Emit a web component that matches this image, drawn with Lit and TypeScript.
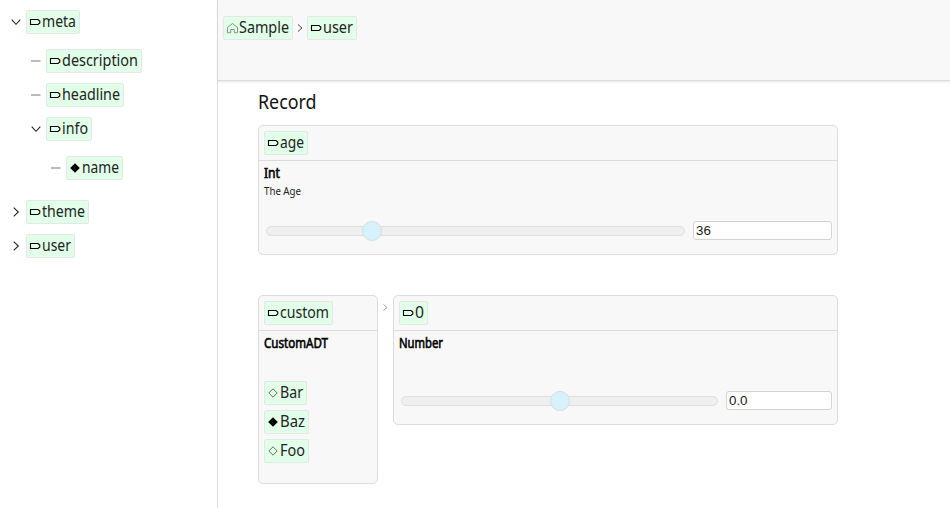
import { LitElement, html, svg, css } from "lit";
import { customElement, property } from "lit/decorators.js";

type IconName = "tag" | "home" | "full" | "empty";

const icons = {
  tag: svg`<path d="M0.5 2.5H8L9.8 4.1V5.9L8 7.5H0.5Z" fill="none" stroke="#000" stroke-width="1.1"/>`,
  home: svg`<path d="M.5 9.7V4.5L5.5 .5L10.5 4.5V9.7H7.3V6.5H3.7V9.7Z" fill="none" stroke="#7f9983" stroke-width="1"/>`,
  full: svg`<path d="M5 .2L9.8 5L5 9.8L.2 5Z" fill="#000"/>`,
  empty: svg`<path d="M5 .8L9.2 5L5 9.2L.8 5Z" fill="none" stroke="#617565" stroke-width="1"/>`,
};

/* A line of text set to a known advance width. */
@customElement("fit-text")
class FitText extends LitElement {
  static styles = css`
    :host { display: block; flex: none; }
    svg { display: block; overflow: visible; }
  `;
  @property() text = "";
  @property({ type: Number }) w = 40;
  @property({ type: Number }) size = 16.2;
  @property({ type: Number }) base = 16;
  @property({ type: Number }) heavy = 0;
  @property() color = "#1c241e";
  render() {
    return html`<svg width=${this.w} height="22">
      <text x="0" y=${this.base} font-family="Noto Sans, sans-serif" font-size=${this.size}
        fill=${this.color} stroke=${this.color} stroke-width=${this.heavy}
        textLength=${this.w} lengthAdjust="spacingAndGlyphs">${this.text}</text>
    </svg>`;
  }
}

@customElement("key-chip")
class KeyChip extends LitElement {
  static styles = css`
    :host { display: block; flex: none; }
    .chip {
      box-sizing: border-box; height: 24px; display: flex; align-items: center;
      padding: 0 3px; border: 1px solid #e2e8e3; border-radius: 2px;
      background: #e2ffe9; gap: 2px;
    }
    .icon { width: 10px; height: 10px; flex: none; overflow: visible; }
  `;
  @property() label = "";
  @property() icon: IconName = "tag";
  @property({ type: Number }) w = 54;
  render() {
    return html`<div class="chip" style="width:${this.w}px">
      <svg class="icon" viewBox="0 0 10 10">${icons[this.icon]}</svg>
      <fit-text .text=${this.label} .w=${this.w - 20}></fit-text>
    </div>`;
  }
}

@customElement("range-field")
class RangeField extends LitElement {
  static styles = css`
    :host { display: flex; align-items: center; height: 20px; gap: 8px; }
    .track {
      box-sizing: border-box; position: relative; flex: 1; height: 10px;
      border: 1px solid #dfdfdf; border-radius: 5px; background: #efefef;
    }
    .thumb {
      box-sizing: border-box; position: absolute; top: -6px; width: 20px; height: 20px;
      border: 1px solid #d5dde0; border-radius: 50%; background: #d7f2fb;
    }
    .box {
      box-sizing: border-box; height: 19px; border: 1px solid #d3d3d3; border-radius: 3px;
      margin-bottom: 1px; padding: 0 2px; background: #fff; color: #1a1a1a;
      font: 13.333px/17px "Liberation Sans", Arial, sans-serif;
    }
  `;
  @property() value = "";
  @property({ type: Number }) at = 0;
  @property({ type: Number }) boxWidth = 139;
  render() {
    return html`<div class="track"><div class="thumb" style="left:${this.at}px"></div></div>
      <div class="box" style="width:${this.boxWidth}px">${this.value}</div>`;
  }
}

interface TreeNode {
  label: string;
  w: number;
  icon?: IconName;
  state: "open" | "closed" | "leaf";
  children?: TreeNode[];
}

const tree: TreeNode[] = [
  { label: "meta", w: 54, state: "open", children: [
    { label: "description", w: 96, state: "leaf" },
    { label: "headline", w: 78, state: "leaf" },
    { label: "info", w: 46, state: "open", children: [
      { label: "name", w: 57, icon: "full", state: "leaf" },
    ] },
  ] },
  { label: "theme", w: 63, state: "closed" },
  { label: "user", w: 49, state: "closed" },
];

const markers = {
  open: svg`<path d="M.7 2.7L5 7.3L9.3 2.7" fill="none" stroke="#222" stroke-width="1.1"/>`,
  closed: svg`<path d="M2.7 .7L7.3 5L2.7 9.3" fill="none" stroke="#222" stroke-width="1.1"/>`,
  leaf: svg`<path d="M0 5H9.5" fill="none" stroke="#bbb" stroke-width="2"/>`,
};

@customElement("app-root")
class AppRoot extends LitElement {
  static styles = css`
    :host { display: flex; width: 950px; height: 508px; overflow: hidden; background: #fff; }
    .side {
      box-sizing: border-box; width: 218px; flex: none; padding: 10px 0 0 11px;
      border-right: 1px solid #dcdcdc;
    }
    .nodes { display: flex; flex-direction: column; gap: 10px; }
    .nodes .nodes { padding: 15px 0 5px 20px; }
    .line { display: flex; align-items: center; gap: 5px; }
    .marker { width: 10px; height: 10px; flex: none; overflow: visible; }
    .main { flex: 1; min-width: 0; display: flex; flex-direction: column; }
    .bar {
      box-sizing: border-box; height: 81px; flex: none; display: flex; align-items: flex-start;
      padding: 16px 5px 0; background: #f8f8f8; border-bottom: 1px solid #dcdcdc;
      box-shadow: 0 1px 2px #0000001a;
    }
    .sep { width: 14px; height: 24px; flex: none; }
    .content { width: 580px; padding: 11px 0 0 40px; }
    .title { height: 22px; margin-bottom: 11px; }
    .card {
      box-sizing: border-box; border: 1px solid #dcdcdc; border-radius: 5px;
      background: #f8f8f8;
    }
    .head { box-sizing: border-box; height: 35px; padding: 5px; border-bottom: 1px solid #dcdcdc; display: flex; }
    .body { padding: 1px 5px 0; }
    .age { height: 130px; margin-bottom: 40px; }
    .age .desc { margin-top: -5px; height: 24px; }
    .age .range { margin: 18px 0 0 2px; }
    .pair { display: flex; align-items: flex-start; }
    .custom { width: 120px; height: 189px; }
    .arrow { width: 15px; height: 24px; flex: none; }
    .number { width: 445px; height: 130px; }
    .number .range { margin: 37px 0 0 2px; }
    .options { display: flex; flex-direction: column; gap: 5px; margin-top: 27px; }
  `;

  nodes(list: TreeNode[]): unknown {
    return html`<div class="nodes">${list.map((n) => html`<div>
      <div class="line">
        <svg class="marker" viewBox="0 0 10 10">${markers[n.state]}</svg>
        <key-chip .label=${n.label} .w=${n.w} .icon=${n.icon ?? "tag"}></key-chip>
      </div>
      ${n.children ? this.nodes(n.children) : ""}
    </div>`)}</div>`;
  }

  type(text: string, w: number) {
    return html`<fit-text .text=${text} .w=${w} .size=${13.6} .base=${16} .heavy=${0.6} .color=${"#000"}></fit-text>`;
  }

  render() {
    return html`
      <div class="side">${this.nodes(tree)}</div>
      <div class="main">
        <div class="bar">
          <key-chip .label=${"Sample"} .icon=${"home"} .w=${70}></key-chip>
          <svg class="sep"><path d="M5 8.5L9 12L5 15.5" fill="none" stroke="#444" stroke-width="1"/></svg>
          <key-chip .label=${"user"} .w=${50}></key-chip>
        </div>
        <div class="content">
          <div class="title"><fit-text .text=${"Record"} .w=${58.5} .size=${19} .base=${17} .color=${"#111"}></fit-text></div>
          <div class="card age">
            <div class="head"><key-chip .label=${"age"} .w=${44}></key-chip></div>
            <div class="body">
              ${this.type("Int", 16)}
              <div class="desc"><fit-text .text=${"The Age"} .w=${37} .size=${10.8} .base=${16} .color=${"#222"}></fit-text></div>
              <range-field class="range" .value=${"36"} .at=${95} .boxWidth=${139}></range-field>
            </div>
          </div>
          <div class="pair">
            <div class="card custom">
              <div class="head"><key-chip .label=${"custom"} .w=${69}></key-chip></div>
              <div class="body">
                ${this.type("CustomADT", 64)}
                <div class="options">
                  <key-chip .label=${"Bar"} .icon=${"empty"} .w=${43}></key-chip>
                  <key-chip .label=${"Baz"} .icon=${"full"} .w=${45}></key-chip>
                  <key-chip .label=${"Foo"} .icon=${"empty"} .w=${45}></key-chip>
                </div>
              </div>
            </div>
            <svg class="arrow"><path d="M5.5 9.5L9 12.5L5.5 15.5" fill="none" stroke="#999" stroke-width="1"/></svg>
            <div class="card number">
              <div class="head"><key-chip .label=${"0"} .w=${29}></key-chip></div>
              <div class="body">
                ${this.type("Number", 44)}
                <range-field class="range" .value=${"0.0"} .at=${148} .boxWidth=${106}></range-field>
              </div>
            </div>
          </div>
        </div>
      </div>`;
  }
}
